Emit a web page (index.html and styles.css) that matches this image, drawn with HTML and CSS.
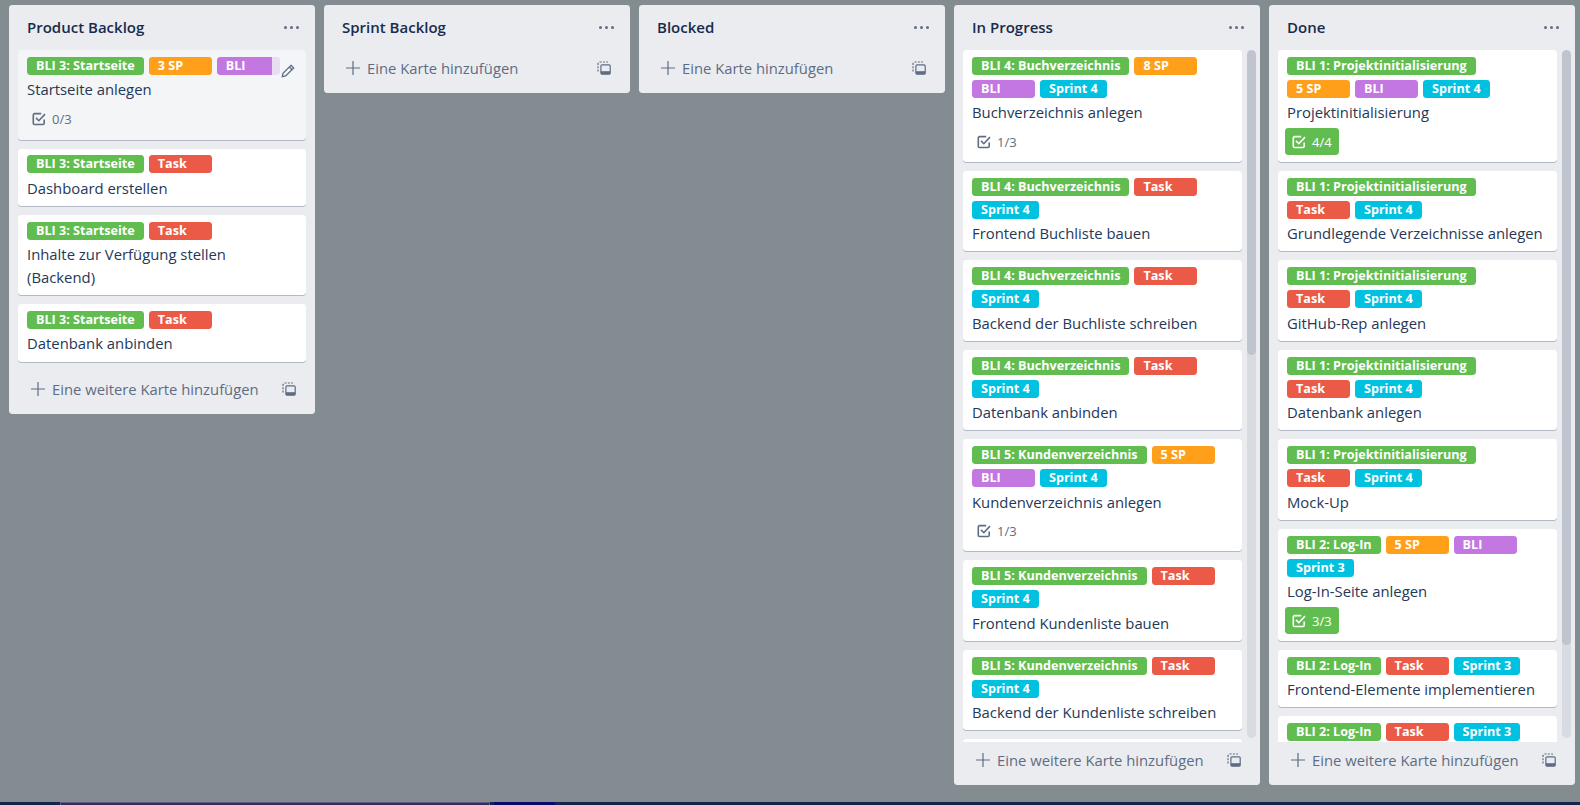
FILE: index.html
```html
<!DOCTYPE html>
<html lang="de">
<head>
  <meta charset="UTF-8" />
  <title>Board</title>
  <link rel="stylesheet" href="styles.css">
</head>
<body>
  <svg class="defs" width="0" height="0">
    <symbol id="i-check" viewBox="0 0 14 14">
      <path d="M12.2 7.5v3.7a1.3 1.3 0 0 1-1.3 1.3H2.6a1.3 1.3 0 0 1-1.3-1.3V2.9a1.3 1.3 0 0 1 1.3-1.3h6.6" fill="none" stroke="currentColor" stroke-width="1.6"/>
      <path d="M4 5.9l2.8 2.8 6.2-6.6" fill="none" stroke="currentColor" stroke-width="1.6"/>
    </symbol>
    <symbol id="i-plus" viewBox="0 0 14 14">
      <path d="M7 0v14M0 7h14" fill="none" stroke="currentColor" stroke-width="1.2"/>
    </symbol>
    <symbol id="i-template" viewBox="0 0 14 14">
      <path d="M1 10.5V3a2 2 0 0 1 2-2h8" fill="none" stroke="currentColor" stroke-width="1.2" stroke-dasharray="2 1.3"/>
      <rect x="3.9" y="3.9" width="9.3" height="9.3" rx="1.2" fill="none" stroke="currentColor" stroke-width="1.2"/>
      <rect x="3.9" y="10.2" width="9.3" height="3" fill="currentColor"/>
    </symbol>
  </svg>

  <main class="board">
    <section class="list">
      <header class="list-header"><h2>Product Backlog</h2><span class="dots"><i></i><i></i><i></i></span></header>
      <div class="list-body">
        <div class="cards">
          <article class="card card-hover">
            <div class="labels"><span class="label green">BLI 3: Startseite</span><span class="label orange">3 SP</span><span class="label purple">BLI</span></div>
            <p class="card-title">Startseite anlegen</p>
            <div class="badges"><span class="badge"><svg class="badge-icon"><use href="#i-check"/></svg>0/3</span></div>
            <span class="edit">
              <svg viewBox="0 0 14 14" width="14" height="14"><path d="M10 1.3l2.7 2.7-8 8-3.4.7.7-3.4zM8.3 3l2.7 2.7" fill="none" stroke="currentColor" stroke-width="1.3"/></svg>
            </span>
          </article>
          <article class="card">
            <div class="labels"><span class="label green">BLI 3: Startseite</span><span class="label red">Task</span></div>
            <p class="card-title">Dashboard erstellen</p>
          </article>
          <article class="card">
            <div class="labels"><span class="label green">BLI 3: Startseite</span><span class="label red">Task</span></div>
            <p class="card-title">Inhalte zur Verfügung stellen<br>(Backend)</p>
          </article>
          <article class="card">
            <div class="labels"><span class="label green">BLI 3: Startseite</span><span class="label red">Task</span></div>
            <p class="card-title">Datenbank anbinden</p>
          </article>
        </div>
      </div>
      <footer class="list-footer"><svg class="plus"><use href="#i-plus"/></svg><span class="add-text">Eine weitere Karte hinzufügen</span><svg class="template"><use href="#i-template"/></svg></footer>
    </section>

    <section class="list">
      <header class="list-header"><h2>Sprint Backlog</h2><span class="dots"><i></i><i></i><i></i></span></header>
      <footer class="list-footer"><svg class="plus"><use href="#i-plus"/></svg><span class="add-text">Eine Karte hinzufügen</span><svg class="template"><use href="#i-template"/></svg></footer>
    </section>

    <section class="list">
      <header class="list-header"><h2>Blocked</h2><span class="dots"><i></i><i></i><i></i></span></header>
      <footer class="list-footer"><svg class="plus"><use href="#i-plus"/></svg><span class="add-text">Eine Karte hinzufügen</span><svg class="template"><use href="#i-template"/></svg></footer>
    </section>

    <section class="list list-full">
      <header class="list-header"><h2>In Progress</h2><span class="dots"><i></i><i></i><i></i></span></header>
      <div class="list-body">
        <div class="cards">
          <article class="card">
            <div class="labels"><span class="label green">BLI 4: Buchverzeichnis</span><span class="label orange">8 SP</span><span class="label purple">BLI</span><span class="label sky">Sprint 4</span></div>
            <p class="card-title">Buchverzeichnis anlegen</p>
            <div class="badges"><span class="badge"><svg class="badge-icon"><use href="#i-check"/></svg>1/3</span></div>
          </article>
          <article class="card">
            <div class="labels"><span class="label green">BLI 4: Buchverzeichnis</span><span class="label red">Task</span><span class="label sky">Sprint 4</span></div>
            <p class="card-title">Frontend Buchliste bauen</p>
          </article>
          <article class="card">
            <div class="labels"><span class="label green">BLI 4: Buchverzeichnis</span><span class="label red">Task</span><span class="label sky">Sprint 4</span></div>
            <p class="card-title">Backend der Buchliste schreiben</p>
          </article>
          <article class="card">
            <div class="labels"><span class="label green">BLI 4: Buchverzeichnis</span><span class="label red">Task</span><span class="label sky">Sprint 4</span></div>
            <p class="card-title">Datenbank anbinden</p>
          </article>
          <article class="card">
            <div class="labels"><span class="label green">BLI 5: Kundenverzeichnis</span><span class="label orange">5 SP</span><span class="label purple">BLI</span><span class="label sky">Sprint 4</span></div>
            <p class="card-title">Kundenverzeichnis anlegen</p>
            <div class="badges"><span class="badge"><svg class="badge-icon"><use href="#i-check"/></svg>1/3</span></div>
          </article>
          <article class="card">
            <div class="labels"><span class="label green">BLI 5: Kundenverzeichnis</span><span class="label red">Task</span><span class="label sky">Sprint 4</span></div>
            <p class="card-title">Frontend Kundenliste bauen</p>
          </article>
          <article class="card">
            <div class="labels"><span class="label green">BLI 5: Kundenverzeichnis</span><span class="label red">Task</span><span class="label sky">Sprint 4</span></div>
            <p class="card-title">Backend der Kundenliste schreiben</p>
          </article>
          <article class="card"></article>
        </div>
        <div class="scrollbar"><div class="thumb thumb-progress"></div></div>
      </div>
      <footer class="list-footer"><svg class="plus"><use href="#i-plus"/></svg><span class="add-text">Eine weitere Karte hinzufügen</span><svg class="template"><use href="#i-template"/></svg></footer>
    </section>

    <section class="list list-full">
      <header class="list-header"><h2>Done</h2><span class="dots"><i></i><i></i><i></i></span></header>
      <div class="list-body">
        <div class="cards">
          <article class="card">
            <div class="labels"><span class="label green">BLI 1: Projektinitialisierung</span><span class="label orange">5 SP</span><span class="label purple">BLI</span><span class="label sky">Sprint 4</span></div>
            <p class="card-title">Projektinitialisierung</p>
            <div class="badges"><span class="badge badge-done"><svg class="badge-icon"><use href="#i-check"/></svg>4/4</span></div>
          </article>
          <article class="card">
            <div class="labels"><span class="label green">BLI 1: Projektinitialisierung</span><span class="label red">Task</span><span class="label sky">Sprint 4</span></div>
            <p class="card-title">Grundlegende Verzeichnisse anlegen</p>
          </article>
          <article class="card">
            <div class="labels"><span class="label green">BLI 1: Projektinitialisierung</span><span class="label red">Task</span><span class="label sky">Sprint 4</span></div>
            <p class="card-title">GitHub-Rep anlegen</p>
          </article>
          <article class="card">
            <div class="labels"><span class="label green">BLI 1: Projektinitialisierung</span><span class="label red">Task</span><span class="label sky">Sprint 4</span></div>
            <p class="card-title">Datenbank anlegen</p>
          </article>
          <article class="card">
            <div class="labels"><span class="label green">BLI 1: Projektinitialisierung</span><span class="label red">Task</span><span class="label sky">Sprint 4</span></div>
            <p class="card-title">Mock-Up</p>
          </article>
          <article class="card">
            <div class="labels"><span class="label green">BLI 2: Log-In</span><span class="label orange">5 SP</span><span class="label purple">BLI</span><span class="label sky">Sprint 3</span></div>
            <p class="card-title">Log-In-Seite anlegen</p>
            <div class="badges"><span class="badge badge-done"><svg class="badge-icon"><use href="#i-check"/></svg>3/3</span></div>
          </article>
          <article class="card">
            <div class="labels"><span class="label green">BLI 2: Log-In</span><span class="label red">Task</span><span class="label sky">Sprint 3</span></div>
            <p class="card-title">Frontend-Elemente implementieren</p>
          </article>
          <article class="card">
            <div class="labels"><span class="label green">BLI 2: Log-In</span><span class="label red">Task</span><span class="label sky">Sprint 3</span></div>
          </article>
        </div>
        <div class="scrollbar"><div class="thumb thumb-done"></div></div>
      </div>
      <footer class="list-footer"><svg class="plus"><use href="#i-plus"/></svg><span class="add-text">Eine weitere Karte hinzufügen</span><svg class="template"><use href="#i-template"/></svg></footer>
    </section>
  </main>

  <div class="taskbar">
    <span class="task task-plain"></span>
    <span class="task task-active"></span>
    <span class="task task-blue"></span>
  </div>
</body>
</html>
```

FILE: styles.css
```css
* {
  box-sizing: border-box;
}
html, body {
  height: 100%;
}
body {
  margin: 0;
  background: #838c91;
  color: #172b4d;
  font-family: "Open Sans", "Noto Sans", sans-serif;
  display: flex;
  flex-direction: column;
  overflow: hidden;
}
.defs {
  position: absolute;
}
.board {
  flex: 1;
  min-height: 0;
  display: flex;
  align-items: flex-start;
  gap: 9px;
  padding: 5px 0 0 9px;
}

/* lists */
.list {
  width: 306px;
  flex: none;
  background: #ebecf0;
  border-radius: 3.4px;
  display: flex;
  flex-direction: column;
}
.list-full {
  height: 780px;
}
.list-header {
  height: 44.75px;
  flex: none;
  display: flex;
  align-items: center;
  justify-content: space-between;
  padding: 0 16px 0 18px;
}
.list-header h2 {
  margin: 0;
  font-size: 15px;
  font-weight: 550;
}
.dots {
  display: flex;
  gap: 2.5px;
}
.dots i {
  width: 3.3px;
  height: 3.3px;
  border-radius: 50%;
  background: #5e6c84;
}
.list-body {
  flex: 1;
  min-height: 0;
  display: flex;
  padding-left: 9px;
}
.cards {
  flex: 1;
  min-width: 0;
  overflow: hidden;
  padding-right: 9px;
}
.list-full .cards {
  padding-right: 0;
}
.scrollbar {
  width: 9px;
  flex: none;
  margin: 0 4px 4px 5px;
  background: #d9dbe3;
  border-radius: 4.5px;
  overflow: hidden;
}
.thumb {
  background: #bfc4ce;
  border-radius: 4.5px;
}
.thumb-progress {
  height: 305px;
}
.thumb-done {
  height: 595px;
}
.list-footer {
  flex: none;
  height: 43px;
  padding: 2.5px 9px 9px 22px;
  display: flex;
  align-items: center;
  color: #5e6c84;
}
.plus {
  width: 14px;
  height: 14px;
  flex: none;
  margin-right: 7px;
}
.add-text {
  flex: 1;
  font-size: 14.8px;
}
.template {
  width: 14px;
  height: 14px;
  flex: none;
  margin-right: 10px;
}

/* cards */
.card {
  position: relative;
  background: #fff;
  border-radius: 3.4px;
  box-shadow: 0 1px 0 rgba(9, 30, 66, .25);
  margin-bottom: 9px;
  padding: 6.75px 9px 2.25px;
  min-height: 57.5px;
}
.card-hover {
  background: #f4f5f7;
  padding-bottom: 3px;
}
.labels {
  display: flex;
  flex-wrap: wrap;
  padding-right: 6px;
}
.label {
  min-width: 63px;
  height: 18px;
  line-height: 18px;
  padding: 0 9px;
  margin: 0 5px 5px 0;
  border-radius: 3.4px;
  color: #fff;
  font-size: 12.6px;
  font-weight: 700;
  white-space: nowrap;
}
.green { background: #61bd4f; }
.orange { background: #ff9f1a; }
.purple { background: #c377e0; }
.red { background: #eb5a46; }
.sky { background: #00c2e0; }
.card-title {
  margin: -1.5px 0 4.5px;
  font-size: 14.85px;
  line-height: 22.5px;
  color: #253858;
}
.badges {
  display: flex;
  margin-bottom: 4.5px;
  margin-left: -2px;
}
.badge {
  height: 27px;
  display: flex;
  align-items: center;
  padding: 0 7px;
  font-size: 13px;
  color: #5e6c84;
  border-radius: 3.4px;
}
.badge-icon {
  width: 14px;
  height: 14px;
  margin-right: 6px;
}
.badge-done {
  background: #61bd4f;
  color: #fff;
}
.edit {
  position: absolute;
  top: 2px;
  right: 2px;
  width: 32px;
  height: 28px;
  padding: 9px 0 0 9px;
  border-radius: 3.4px;
  background: rgba(244, 245, 247, .8);
  color: #5e6c84;
}

/* taskbar at the window edge */
.taskbar {
  height: 3px;
  flex: none;
  background: #14244a;
  display: flex;
}
.task-plain {
  width: 60px;
}
.task-active {
  width: 430px;
  background: #342d5c;
  border-top: 1px solid #5f5a85;
  border-left: 1px solid #5f5a85;
  border-right: 1px solid #5f5a85;
}
.task-blue {
  width: 61px;
  margin-left: 4px;
  background: #0a0a6a;
}
```
